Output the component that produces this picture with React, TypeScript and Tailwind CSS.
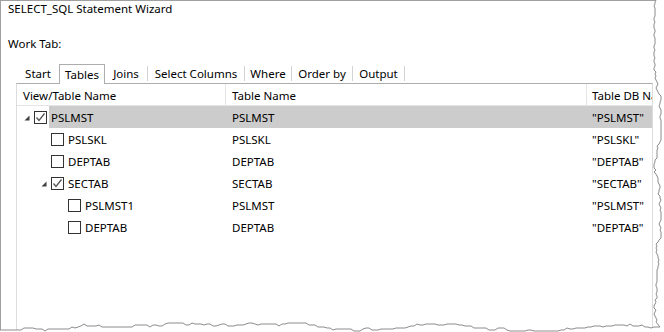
import React from 'react'

type Row = {
  name: string
  table: string
  db: string
  depth: number
  expander?: boolean
  checked?: boolean
  selected?: boolean
}

const rows: Row[] = [
  { name: 'PSLMST', table: 'PSLMST', db: '"PSLMST"', depth: 0, expander: true, checked: true, selected: true },
  { name: 'PSLSKL', table: 'PSLSKL', db: '"PSLSKL"', depth: 1 },
  { name: 'DEPTAB', table: 'DEPTAB', db: '"DEPTAB"', depth: 1 },
  { name: 'SECTAB', table: 'SECTAB', db: '"SECTAB"', depth: 1, expander: true, checked: true },
  { name: 'PSLMST1', table: 'PSLMST', db: '"PSLMST"', depth: 2 },
  { name: 'DEPTAB', table: 'DEPTAB', db: '"DEPTAB"', depth: 2 },
]

const tabs = [
  { label: 'Start', w: 'w-[42px]' },
  { label: 'Tables', w: 'w-[46px]', active: true },
  { label: 'Joins', w: 'w-[42px]', sep: true },
  { label: 'Select Columns', w: 'w-[96px]', sep: true },
  { label: 'Where', w: 'w-[46px]', sep: true },
  { label: 'Order by', w: 'w-[60px]', sep: true },
  { label: 'Output', w: 'w-[51px]', sep: true },
]

// torn paper edge, seeded so it stays the same between renders
function rand(seed: number) {
  let s = seed
  return () => {
    s = (s * 16807) % 2147483647
    return (s - 1) / 2147483646
  }
}

function tornEdge() {
  const r = rand(11)
  const right: [number, number][] = []
  let x = 657
  for (let y = 0; y <= 322; y += 2) {
    x += (r() - 0.5) * 3
    x = Math.max(654, Math.min(661, x))
    right.push([Math.round(x), y])
  }
  const bottom: [number, number][] = []
  let y = 327
  for (let bx = 660; bx >= 0; bx -= 3) {
    if (r() > 0.5) y += (r() - 0.5) * 4
    y = Math.max(323, Math.min(331, y))
    bottom.push([bx, Math.round(y)])
  }
  return [...right, ...bottom]
}

const edge = tornEdge()
const edgeLine = edge.map((p) => p.join(',')).join(' ')
const edgeFill = `664,0 ${edgeLine} 0,332 664,332`

function Checkbox({ checked }: { checked?: boolean }) {
  return (
    <div className="w-[13px] h-[13px] border border-[#333333] bg-white flex items-center justify-center shrink-0">
      {checked && (
        <svg width="11" height="11" viewBox="0 0 11 11">
          <polyline points="1.5,5.5 4,8.5 9.5,1.5" fill="none" stroke="#555555" strokeWidth="1.3" />
        </svg>
      )}
    </div>
  )
}

function Expander() {
  return (
    <svg width="6" height="6" viewBox="0 0 6 6" className="shrink-0">
      <polygon points="5.5,0.5 5.5,5.5 0.5,5.5" fill="#404040" />
    </svg>
  )
}

export default function App() {
  return (
    <div className="relative w-[664px] h-[332px] bg-white overflow-hidden font-['Noto_Sans',sans-serif] text-[11.5px] text-black">
      <div className="w-[664px] h-[332px] border-l border-t border-[#a0a0a0] flex flex-col">
        <div className="pl-[7px] h-[16px] leading-[16px]">SELECT_SQL Statement Wizard</div>
        <div className="pl-[7px] mt-[19px] h-[16px] leading-[16px]">Work Tab:</div>

        <div className="mt-[12px] ml-[16px] flex items-end h-[19px]">
          {tabs.map((t) => (
            <React.Fragment key={t.label}>
              <div
                className={`${t.w} h-[19px] flex items-center justify-center leading-none whitespace-nowrap ${
                  t.active ? 'border border-b-0 border-[#adadad] bg-white relative top-px h-[20px]' : ''
                }`}
              >
                {t.label}
              </div>
              {t.sep && <div className="w-px h-[15px] bg-[#d4d4d4] self-center" />}
            </React.Fragment>
          ))}
        </div>

        <div className="ml-[15px] w-[637px] flex-1 border-t border-x border-t-[#adadad] border-x-[#dcdcdc] flex flex-col">
          <div className="grid grid-cols-[209px_361px_1fr] h-[22px] border-b border-[#e5e5e5]">
            <div className="pl-[6px] pt-[2px] border-r border-[#e5e5e5] flex items-center whitespace-nowrap overflow-hidden">View/Table Name</div>
            <div className="pl-[6px] pt-[2px] border-r border-[#e5e5e5] flex items-center whitespace-nowrap overflow-hidden">Table Name</div>
            <div className="pl-[5px] pt-[2px] flex items-center whitespace-nowrap overflow-hidden">Table DB Na</div>
          </div>

          {rows.map((row, i) => {
            const bg = row.selected ? 'bg-[#cccccc]' : ''
            return (
              <div key={i} className="grid grid-cols-[209px_361px_1fr] h-[22px]">
                <div className="flex items-center">
                  <div
                    className="flex items-center shrink-0 h-full pt-px"
                    style={{ width: 32 + 17 * row.depth, paddingLeft: 17 * row.depth }}
                  >
                    <div className="w-[17px] pl-[7px] flex items-center">{row.expander && <Expander />}</div>
                    <Checkbox checked={row.checked} />
                  </div>
                  <div className={`flex-1 h-full flex items-center pl-[2px] pt-[2px] whitespace-nowrap ${bg}`}>{row.name}</div>
                </div>
                <div className={`pl-[6px] pt-[2px] flex items-center whitespace-nowrap ${bg}`}>{row.table}</div>
                <div className={`pl-[5px] pt-[2px] flex items-center whitespace-nowrap overflow-hidden ${bg}`}>{row.db}</div>
              </div>
            )
          })}
        </div>
      </div>

      <svg className="absolute inset-0 pointer-events-none" width="664" height="332" viewBox="0 0 664 332">
        <polygon points={edgeFill} fill="#ffffff" />
        <polyline points={edgeLine} fill="none" stroke="#8c8c8c" strokeWidth="1" />
      </svg>
    </div>
  )
}
